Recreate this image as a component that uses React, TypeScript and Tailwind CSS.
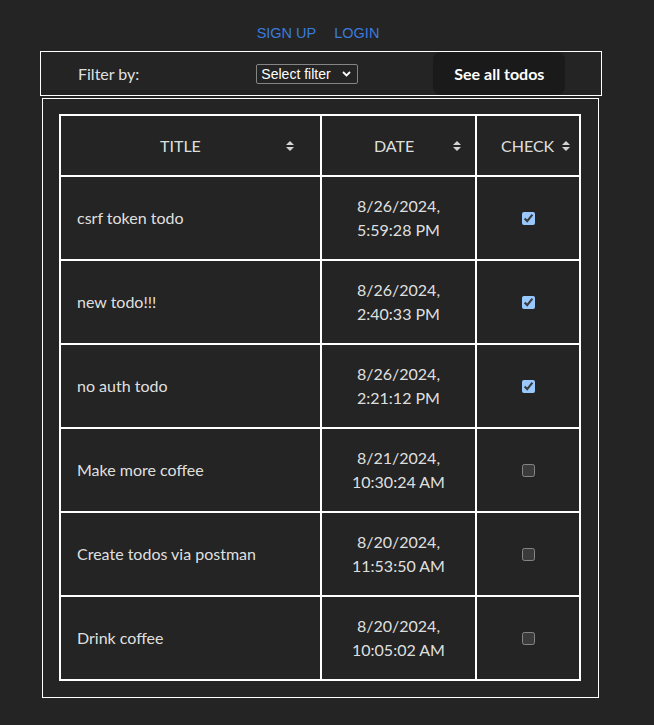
import React from "react";

const todos = [
  { title: "csrf token todo", d1: "8/26/2024,", d2: "5:59:28 PM", done: true },
  { title: "new todo!!!", d1: "8/26/2024,", d2: "2:40:33 PM", done: true },
  { title: "no auth todo", d1: "8/26/2024,", d2: "2:21:12 PM", done: true },
  { title: "Make more coffee", d1: "8/21/2024,", d2: "10:30:24 AM", done: false },
  { title: "Create todos via postman", d1: "8/20/2024,", d2: "11:53:50 AM", done: false },
  { title: "Drink coffee", d1: "8/20/2024,", d2: "10:05:02 AM", done: false },
];

function SortIcon() {
  return (
    <svg width="8" height="10" viewBox="0 0 8 10" className="block shrink-0">
      <polygon points="4,0 8,4 0,4" fill="#d4d4d4" />
      <polygon points="0,6 8,6 4,10" fill="#d4d4d4" />
    </svg>
  );
}

export default function App() {
  return (
    <div
      className="min-h-[725px] w-full bg-[#242424] text-[rgba(255,255,255,0.87)] [color-scheme:dark]"
      style={{ fontFamily: "Lato, 'Noto Sans', sans-serif" }}
    >
      <nav className="flex h-[51px] items-start justify-center pt-[25px] font-['Liberation_Sans',Arial,sans-serif] text-[14.5px] leading-[17px] text-[#3b7bdc]">
        <div className="ml-[-18px] flex gap-[18px]">
          <a className="cursor-pointer">SIGN UP</a>
          <a className="cursor-pointer">LOGIN</a>
        </div>
      </nav>

      <div className="ml-[40px] flex w-[562px] items-center border border-white">
        <span className="ml-[37px] text-[16px] leading-[24px]">Filter by:</span>
        <div className="relative ml-[117px] flex items-center">
          <select className="block h-[20px] w-[102px] appearance-none rounded-[2px] border border-[#858585] bg-[#242424] py-0 pl-[4px] font-['Liberation_Sans',Arial,sans-serif] text-[14px] leading-[18px] text-white">
            <option>Select filter</option>
          </select>
          <svg
            width="9"
            height="6"
            viewBox="0 0 9 6"
            className="pointer-events-none absolute right-[7px] top-[7px]"
          >
            <polyline points="1,1 4.5,4.5 8,1" fill="none" stroke="#ffffff" strokeWidth="1.8" />
          </svg>
        </div>
        <button className="ml-[75px] h-[43px] w-[132px] rounded-[8px] bg-[#1a1a1a] text-[16px] font-bold leading-[24px] text-white">
          See all todos
        </button>
      </div>

      <div className="ml-[42px] mt-[2px] w-[557px] border border-white p-4">
        <div className="mt-[-1px] w-[522px] border-l-2 border-t-2 border-white">
          <div className="grid grid-cols-[261px_155px_104px] text-[16px] leading-[24px]">
            <div className="flex h-[61px] items-center border-b-2 border-r-2 border-white pl-[99px] pr-[26px]">
              <span>TITLE</span>
              <span className="ml-auto">
                <SortIcon />
              </span>
            </div>
            <div className="flex h-[61px] items-center border-b-2 border-r-2 border-white pl-[52px] pr-[14px]">
              <span>DATE</span>
              <span className="ml-auto">
                <SortIcon />
              </span>
            </div>
            <div className="flex h-[61px] items-center border-b-2 border-r-2 border-white pl-[24px] pr-[9px]">
              <span>CHECK</span>
              <span className="ml-auto">
                <SortIcon />
              </span>
            </div>
            {todos.map((t, i) => (
              <React.Fragment key={i}>
                <div className="flex h-[84px] items-center border-b-2 border-r-2 border-white pl-4">
                  {t.title}
                </div>
                <div className="flex h-[84px] flex-col items-center justify-center border-b-2 border-r-2 border-white text-center">
                  <span>{t.d1}</span>
                  <span>{t.d2}</span>
                </div>
                <div className="flex h-[84px] items-center justify-center border-b-2 border-r-2 border-white">
                  <input
                    type="checkbox"
                    defaultChecked={t.done}
                    className="m-0 h-[13px] w-[13px]"
                  />
                </div>
              </React.Fragment>
            ))}
          </div>
        </div>
      </div>
    </div>
  );
}
